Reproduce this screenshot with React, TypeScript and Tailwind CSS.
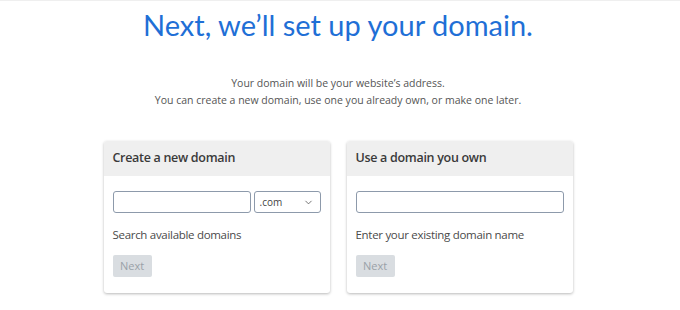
import { ChevronDown } from 'lucide-react';

function Card({ title, hint, withSelect }: { title: string; hint: string; withSelect?: boolean }) {
  return (
    <div className="w-[226px] rounded-[3px] bg-white shadow-[0_1px_3px_rgba(0,0,0,0.28)] overflow-hidden">
      <div className="h-[35px] bg-[#efefef] px-[9px] flex items-center text-[12.5px] tracking-[-0.3px] font-semibold text-[#3a3a3a]">
        {title}
      </div>
      <div className="px-[9px] pt-[15px] pb-[16px]">
        <div className="flex gap-[3px]">
          <div className="flex-1 h-[22px] rounded-[3px] border border-[#8d9aab] bg-white" />
          {withSelect && (
            <div className="w-[67px] h-[22px] rounded-[3px] border border-[#8d9aab] bg-white flex items-center justify-between pl-[5px] pr-[6px]">
              <span className="text-[10px] text-[#444]">.com</span>
              <ChevronDown size={11} strokeWidth={1.75} className="text-[#555]" />
            </div>
          )}
        </div>
        <p className="mt-[14px] text-[11.5px] tracking-[-0.3px] leading-[16px] text-[#4a4a4a]">{hint}</p>
        <button className="mt-[12px] h-[22px] w-[39px] rounded-[2px] bg-[#d9dde1] text-[11px] text-[#9aa1a8]">
          Next
        </button>
      </div>
    </div>
  );
}

export default function App() {
  return (
    <div className="w-[680px] h-[310px] bg-white border-t border-[#efefef] overflow-hidden" style={{ fontFamily: '"Open Sans", sans-serif' }}>
      <div className="flex flex-col items-center pr-[4px]">
        <h1 className="mt-[6px] text-[29px] leading-[36px] text-[#1f6fd6]" style={{ fontFamily: 'Lato, sans-serif' }}>
          Next, we’ll set up your domain.
        </h1>
        <div className="mt-[32px] text-center text-[10.5px] leading-[17px] text-[#555]">
          <p>Your domain will be your website’s address.</p>
          <p>You can create a new domain, use one you already own, or make one later.</p>
        </div>
        <div className="mt-[32px] flex gap-[17px]">
          <Card title="Create a new domain" hint="Search available domains" withSelect />
          <Card title="Use a domain you own" hint="Enter your existing domain name" />
        </div>
      </div>
    </div>
  );
}
